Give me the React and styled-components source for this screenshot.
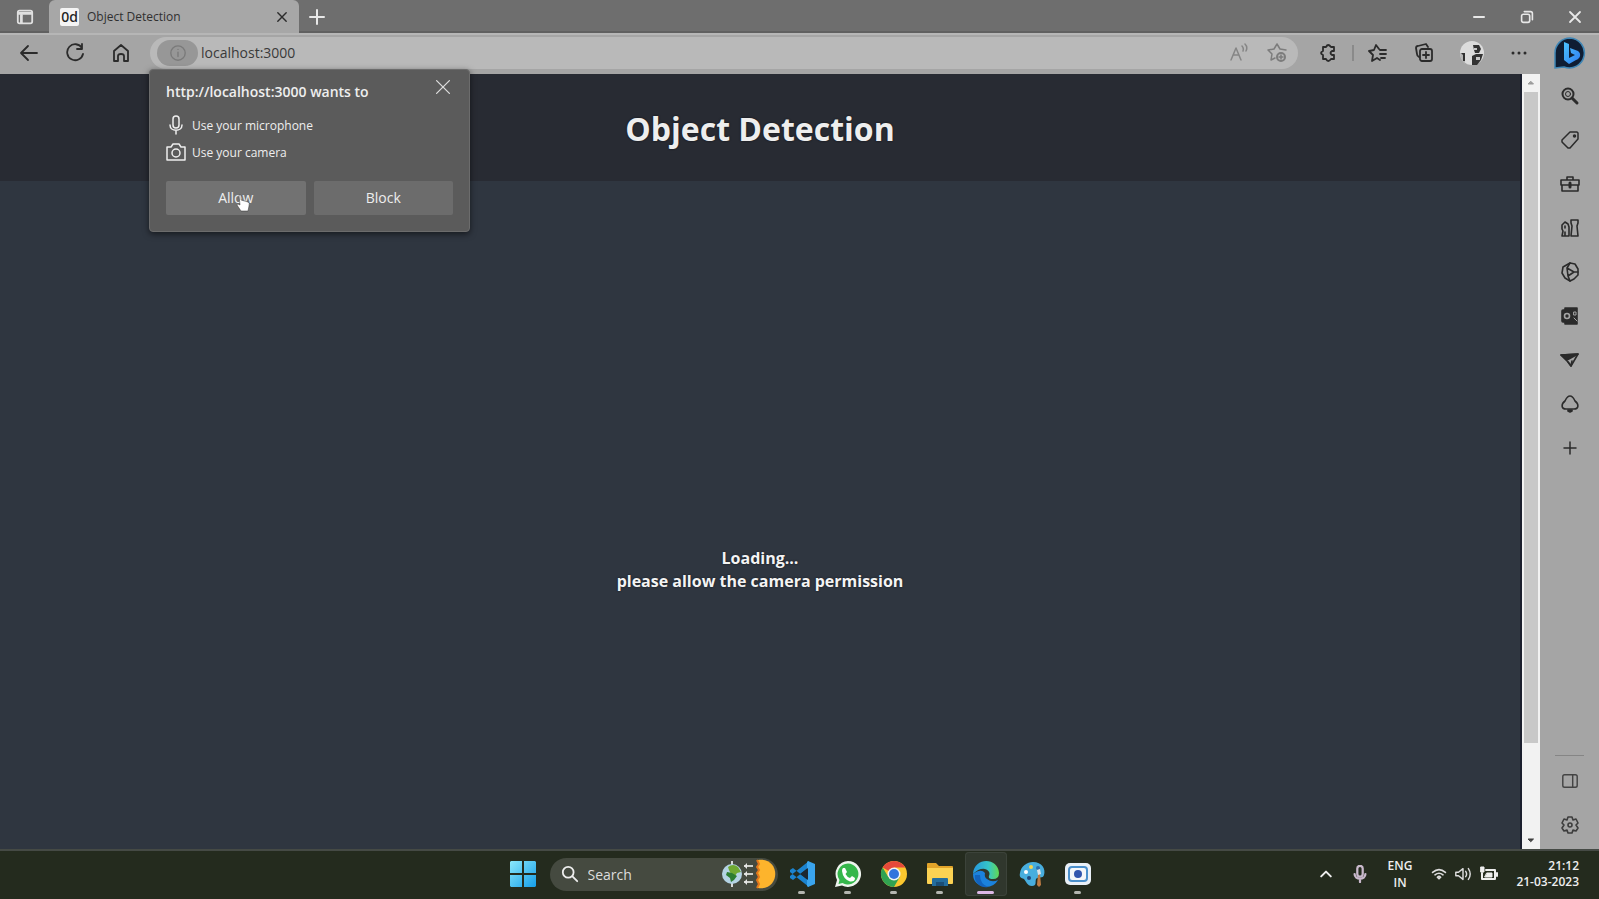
import React from "react";
import styled, { createGlobalStyle } from "styled-components";

const GlobalStyle = createGlobalStyle`
  *, *::before, *::after { box-sizing: border-box; }
  html, body { margin: 0; padding: 0; background: #a5a5a5; }
  body, button, input {
    font-family: "Open Sans", "Noto Sans", "Liberation Sans", sans-serif;
  }
  button { border: 0; padding: 0; background: none; color: inherit; }
  h1, h2, p, ul { margin: 0; padding: 0; font-weight: inherit; }
`;

/* ---------- shell ---------- */

const Desktop = styled.div`
  display: flex;
  flex-direction: column;
  min-height: 100vh;
  overflow: hidden;
`;

const Row = styled.div`
  display: flex;
  align-items: center;
`;

const IconButton = styled.button`
  display: flex;
  flex: none;
  align-items: center;
  justify-content: center;
  width: ${(p) => p.$w || 46}px;
  height: ${(p) => p.$h || 32}px;
  color: ${(p) => p.$color || "#2b2b2b"};
`;

const Svg = styled.svg`
  display: block;
  flex: none;
  fill: none;
  stroke: currentColor;
  stroke-width: ${(p) => p.$weight || 2};
  stroke-linecap: round;
  stroke-linejoin: round;
`;

const Icon = ({ size = 20, weight, children }) => (
  <Svg width={size} height={size} viewBox="0 0 20 20" $weight={weight} aria-hidden="true">
    {children}
  </Svg>
);

/* ---------- tab strip ---------- */

const TabStrip = styled(Row)`
  height: 33px;
  background: #6e6e6e;
  box-shadow: inset 0 -2px 0 #606060;
`;

const Tab = styled.div`
  display: flex;
  align-items: center;
  width: 250px;
  height: 33px;
  padding: 0 4px 0 11px;
  gap: 8px;
  border-radius: 6px 6px 0 0;
  background: #a7a7a7;
  color: #303030;
`;

const Favicon = styled.span`
  width: 19px;
  height: 18px;
  border-radius: 2px;
  background: #f4f4f4;
  color: #222222;
  font: 500 14px/18px "Noto Sans", sans-serif;
  text-align: center;
`;

const TabTitle = styled.span`
  flex: 1;
  font-size: 12px;
  font-weight: 500;
  line-height: 18px;
`;

const WindowControls = styled(Row)`
  margin-left: auto;
`;

/* ---------- toolbar ---------- */

const Toolbar = styled(Row)`
  height: 41px;
  padding: 0 0 4px 6px;
  background: #a5a5a5;
  border-top: 2px solid #b6b6b6;
`;

const AddressBar = styled.div`
  position: relative;
  display: flex;
  flex: 1;
  align-items: center;
  height: 32px;
  margin: 0 7px 0 6px;
  padding: 0 2px 0 7px;
  border-radius: 16px;
  background: #b9b9b9;
`;

const SiteInfo = styled(IconButton)`
  width: 41px;
  height: 26px;
  margin-right: 3px;
  border-radius: 13px;
  background: #979797;
  color: #7a7a7a;
`;

const AddressInput = styled.input`
  flex: 1;
  min-width: 0;
  height: 28px;
  padding: 0;
  border: 0;
  outline: 0;
  background: transparent;
  color: #3a3a3a;
  font-size: 14px;
`;

const Divider = styled.span`
  width: 2px;
  height: 16px;
  margin: 0 1px;
  background: #8a8a8a;
`;

/* ---------- permission prompt ---------- */

const Prompt = styled.section`
  position: absolute;
  z-index: 2;
  top: 100%;
  left: -1px;
  width: 321px;
  padding: 12px 16px 16px;
  border: 1px solid #6c6c6c;
  border-radius: 4px;
  background: #5b5b5b;
  box-shadow: 0 2px 6px rgba(0, 0, 0, 0.55);
  color: #eeeeee;
`;

const PromptHead = styled.div`
  display: flex;
  justify-content: space-between;
  align-items: flex-start;
  height: 30px;
`;

const PromptTitle = styled.h2`
  font-size: 14px;
  font-weight: 600;
  line-height: 20px;
`;

const PromptClose = styled.button`
  display: flex;
  align-items: center;
  justify-content: center;
  width: 20px;
  height: 10px;
  color: #dddddd;
`;

const RequestList = styled.ul`
  list-style: none;
`;

const Request = styled.li`
  display: flex;
  align-items: center;
  gap: 6px;
  height: 27px;
  font-size: 12px;
  font-weight: 500;
`;

const Actions = styled.div`
  display: grid;
  grid-template-columns: 1fr 1fr;
  gap: 8px;
  margin-top: 15px;
`;

const ActionButton = styled.button`
  position: relative;
  height: 34px;
  border-radius: 2px;
  background: ${(p) => (p.$hover ? "#727272" : "#6c6c6c")};
  font-size: 14px;
  font-weight: 500;
`;

const Pointer = styled.svg`
  position: absolute;
  top: 13px;
  left: 70px;
`;

/* ---------- page ---------- */

const Body = styled.div`
  display: flex;
  flex: 1;
`;

const Page = styled.div`
  display: flex;
  flex: 1;
  flex-direction: column;
  background: #2f3640;
  border-right: 2px solid #1b1f2e;
`;

const PageHeader = styled.header`
  display: flex;
  align-items: center;
  justify-content: center;
  height: 107px;
  padding-top: 2px;
  background: #282b33;
`;

const PageTitle = styled.h1`
  color: #eeeeee;
  font: 700 32px/44px "Open Sans", "Noto Sans", sans-serif;
  text-shadow: 0 0 2px #0c0e12;
`;

const Loading = styled.main`
  display: flex;
  flex: 1;
  flex-direction: column;
  align-items: center;
  justify-content: center;
  padding-top: 110px;
  color: #f4f4f4;
  font-size: 16px;
  font-weight: 700;
  line-height: 23px;
  text-shadow: 0 0 2px #12161c;
`;

const ScrollBar = styled.div`
  display: flex;
  flex-direction: column;
  width: 18px;
  background: #f2f2f2;
`;

const ScrollThumb = styled.span`
  flex: 652;
  margin: 0 2px;
  background: #c8c8c8;
`;

const ScrollSpace = styled.span`
  flex: 88;
`;

const SideBar = styled.aside`
  display: flex;
  flex-direction: column;
  align-items: center;
  width: 59px;
  padding-bottom: 2px;
  background: #a5a5a5;
`;

const SideRule = styled.span`
  width: 29px;
  height: 1px;
  margin: auto 0 3px;
  background: #858585;
`;

/* ---------- taskbar ---------- */

const Taskbar = styled.footer`
  display: grid;
  grid-template-columns: 1fr auto 1fr;
  align-items: center;
  height: 50px;
  padding-bottom: 2px;
  border-top: 2px solid #454a45;
  background: #242b1e;
  color: #eeeeee;
`;

const StartButton = styled.button`
  width: 44px;
  height: 46px;
  margin-left: 2px;
  display: grid;
  place-items: center;
`;

const SearchBox = styled.label`
  display: flex;
  align-items: center;
  gap: 9px;
  width: 228px;
  height: 33px;
  margin: 0 1px 0 5px;
  padding: 0 1px 0 11px;
  border-radius: 17px;
  background: #454a40;
`;

const SearchInput = styled.input`
  flex: 1;
  min-width: 0;
  padding: 0;
  border: 0;
  outline: 0;
  background: transparent;
  font-size: 14px;
  &::placeholder { color: #dddddd; opacity: 1; }
`;

const AppButton = styled.button`
  display: flex;
  flex-direction: column;
  align-items: center;
  width: 42px;
  height: 44px;
  margin: 0 2px;
  padding-top: 8px;
  gap: 3px;
  border-radius: 4px;
  background: ${(p) => (p.$active ? "#30372d" : "transparent")};
  box-shadow: ${(p) => (p.$active ? "inset 0 0 0 1px #3c433a" : "none")};
  &::after {
    content: "";
    width: ${(p) => (p.$active ? 17 : 7)}px;
    height: 3px;
    border-radius: 2px;
    background: ${(p) => (p.$active ? "#dcb8e6" : "#b4b6b0")};
    visibility: ${(p) => (p.$idle ? "hidden" : "visible")};
  }
`;

const Tray = styled(Row)`
  justify-content: flex-end;
  padding-right: 20px;
`;

const Language = styled.button`
  width: 40px;
  margin: 0 7px 0 3px;
  font-size: 12px;
  font-weight: 600;
  line-height: 17px;
`;

const Clock = styled.time`
  width: 76px;
  font-size: 12px;
  font-weight: 600;
  line-height: 16px;
  text-align: right;
  white-space: nowrap;
`;

/* ---------- drawings ---------- */

const MicIcon = ({ size = 20, weight = 1.5 }) => (
  <Icon size={size} weight={weight}>
    <rect x="7" y="1" width="6" height="12" rx="3" />
    <path d="M4 10c0 7 12 7 12 0M10 15.500v3.500" />
  </Icon>
);

const BingIcon = () => (
  <svg width="34" height="34" viewBox="0 0 34 34" aria-hidden="true">
    <defs>
      <linearGradient id="bing-b" x1="0" y1="0" x2="1" y2="1">
        <stop offset="0" stopColor="#4cc4ff" />
        <stop offset="1" stopColor="#2f7cf0" />
      </linearGradient>
    </defs>
    <path d="M17 2a15 15 0 1 1-6 29l-9 1V17A15 15 0 0 1 17 2z" fill="#0f1d33" stroke="#3f86b5" strokeWidth="1.500" />
    <path d="M11 6l5 2v14l6-3-4-2-1-5 8 3c4 3 2 8-2 9l-7 4-5-4z" fill="url(#bing-b)" />
  </svg>
);

const AvatarIcon = () => (
  <svg width="28" height="28" viewBox="0 0 28 28" aria-hidden="true">
    <circle cx="14" cy="14" r="12" fill="#dcdcdc" />
    <path d="M2 14h5v11q-4-3-5-11z" fill="#b5b5b5" />
    <path d="M3 14h4v8H5v-6z" fill="#303030" />
    <path d="M15 6h6l2 4-2 4h-4l-1-3zM14 17l4-2h7l-2 6-4 5h-5z" fill="#333333" />
    <path d="M16 9h3v2h-3zM18 18h4v3h-4z" fill="#c9c9c9" />
  </svg>
);

const WindowsIcon = () => (
  <svg width="26" height="26" viewBox="0 0 26 26" aria-hidden="true">
    <defs>
      <linearGradient id="win" x1="0" y1="0" x2="1" y2="1">
        <stop offset="0" stopColor="#8be8fb" />
        <stop offset="1" stopColor="#159ee9" />
      </linearGradient>
    </defs>
    <path d="M1 0h11v12H0V1zM14 0h11l1 1v11H14zM0 14h12v12H1l-1-1zM14 14h12v11l-1 1H14z" fill="url(#win)" />
  </svg>
);

const EquinoxIcon = () => (
  <svg width="56" height="32" viewBox="0 0 56 32" aria-hidden="true">
    <path d="M11 3v26" stroke="#d9d9d9" strokeWidth="2" />
    <circle cx="11" cy="16" r="10" fill="#b4d3e4" />
    <path d="M7 9q5-4 10 0l3 5-4 1-2 3-4-2-2-4z" fill="#6fa832" />
    <path d="M6 14l5 1 5 3-3 4-3 2-1-4-4-3z" fill="#2c7d31" />
    <path d="M23 8h9M23 16h9M23 24h9" stroke="#cfd1cc" strokeWidth="2" />
    <path d="M23 8l3-3v6zM23 16l3-3v6zM23 24l3-3v6z" fill="#e6e6e6" />
    <path d="M37 2c23-3 23 31 0 28z" fill="#fdb42c" />
    <path d="M36 2l2 4-2 3 2 3-2 3 2 4-2 3 2 4-2 4" fill="none" stroke="#e2761b" strokeWidth="2" />
  </svg>
);

const CodeIcon = () => (
  <svg width="28" height="28" viewBox="0 0 28 28" aria-hidden="true">
    <path d="M2 10l3-2 16 13v6L2 12zM2 18l3 2L21 7V1L2 16z" fill="#1b83cf" />
    <path d="M20 1l7 3v20l-7 3-1-1V2z" fill="#3aa5ee" />
    <path d="M20 8v12l-8-6z" fill="#1c2832" />
  </svg>
);

const WhatsAppIcon = () => (
  <svg width="28" height="28" viewBox="0 0 28 28" aria-hidden="true">
    <path d="M14 1a13 13 0 1 1-6 24.500L1 27l2-7A13 13 0 0 1 14 1z" fill="#eef4ee" />
    <path d="M14 3.500a10.500 10.500 0 1 1-5.500 19.500L4.500 24l1-4A10.500 10.500 0 0 1 14 3.500z" fill="#35b74b" />
    <path d="M9 8h2l2 4-1.500 2q1.500 3 4.500 4l2-2 3 2q0 4-5 3.500Q9 19 8 11q0-2 1-3z" fill="#ffffff" />
  </svg>
);

const ChromeIcon = () => (
  <svg width="28" height="28" viewBox="0 0 28 28" aria-hidden="true">
    <circle cx="14" cy="14" r="13" fill="#fbc72e" />
    <path d="M14 14L2.700 7.500A13 13 0 0 1 25.300 7.500H14z" fill="#e5493a" />
    <path d="M2.700 7.500A13 13 0 0 0 14 27l5.600-9.800L14 14l-5.600 3.200z" fill="#31a351" />
    <circle cx="14" cy="14" r="6.500" fill="#f3f3f3" />
    <circle cx="14" cy="14" r="5" fill="#3274dd" />
  </svg>
);

const FolderIcon = () => (
  <svg width="28" height="28" viewBox="0 0 28 28" aria-hidden="true">
    <path d="M1 4q0-1 1-1h8l3 3h13q1 0 1 1v5H1z" fill="#e2a42a" />
    <path d="M1 8h26v15q0 1-1 1H2q-1 0-1-1z" fill="#fbd253" />
    <path d="M6 19q0-1 1-1h14q1 0 1 1v7H6z" fill="#236d9e" />
    <path d="M10 22h8v4h-8z" fill="#1a4e77" />
  </svg>
);

const EdgeIcon = () => (
  <svg width="28" height="28" viewBox="0 0 28 28" aria-hidden="true">
    <defs>
      <linearGradient id="edge-top" x1="0" y1="0" x2="1" y2="0">
        <stop offset="0" stopColor="#2597df" />
        <stop offset="0.6" stopColor="#36c5c7" />
        <stop offset="1" stopColor="#62d851" />
      </linearGradient>
    </defs>
    <path d="M1 14Q1 25 14 27q8 0 12-7-6 3-11-1-3-2-2-6-4-5-12 1z" fill="#1b82dd" />
    <path d="M8 15q0 9 8 12-6 1-10-3-4-4-3-9z" fill="#1263bd" />
    <path d="M1 14C2-3 26-3 27 13q0 6-6 6-5 0-4-3 2-5-4-7Q7 8 1 14z" fill="url(#edge-top)" />
  </svg>
);

const PaintIcon = () => (
  <svg width="28" height="28" viewBox="0 0 28 28" aria-hidden="true">
    <path d="M15 2c9 0 13 7 11 13-1 4-6 1-8 4-1 3 1 7-4 7-5 0-6-5-8-7-3-1-5-2-4-6C3 6 9 2 15 2z" fill="#48aede" />
    <circle cx="8" cy="12" r="2" fill="#ffffff" />
    <circle cx="13" cy="7" r="2" fill="#f5d550" />
    <circle cx="20" cy="8" r="2" fill="#2c6fae" />
    <circle cx="11" cy="18" r="2" fill="#22497c" />
    <path d="M20 14h2l1 11-2 2-2-2z" fill="#bd7b44" />
    <path d="M19 10l3-1 1 5-3 1z" fill="#dce3e8" />
  </svg>
);

const CameraAppIcon = () => (
  <svg width="28" height="28" viewBox="0 0 28 28" aria-hidden="true">
    <rect x="1" y="3" width="26" height="22" rx="5" fill="#e9f0f7" />
    <rect x="5" y="7" width="18" height="14" rx="3" fill="#f4f6f9" stroke="#4a8fcb" strokeWidth="2" />
    <circle cx="14" cy="14" r="4" fill="#3155ad" />
  </svg>
);

const sideItems = [
  ["Search", <Icon weight={2}><circle cx="8" cy="8" r="5.500" /><circle cx="8" cy="8" r="2.500" strokeWidth="1" /><path d="M12 12l5 5" strokeWidth="3" /></Icon>],
  ["Shopping", <Icon weight={1.5}><path d="M10 2h7l1 1v6l-8 9H8l-6-6v-2z" /><circle cx="14.500" cy="6" r="1" fill="currentColor" /></Icon>],
  ["Tools", <Icon weight={1.6}><path d="M1 6h18v5H1zM2 11v6h16v-6M7 6V3h6v3" /><path d="M10 9v4" strokeWidth="3" /></Icon>],
  ["Games", <Icon weight={1.6}><path d="M11 2h7v3l-1 3 1 10h-7l1-10-1-3zM2 18h7V9L8 6 5 4 2 7v4l1 2zM5 8v2M5 14v3" /></Icon>],
  ["Microsoft 365", <Icon weight={1.6}><path d="M10 1l5 1 3 5v6l-4 4-4 2-5-3-3-5 1-6z" /><path d="M7 6l7 4-6 4zM10 1L7 6M18 10h-4M8 14l2 5" /></Icon>],
  ["Outlook", <Icon weight={1.6}><path d="M5 2h12v16H5z" fill="currentColor" /><rect x="2" y="4" width="10" height="12" rx="1" fill="currentColor" /><circle cx="7" cy="10" r="2.500" stroke="#a5a5a5" /><path d="M14 6h2v3h-2zM14 12l3 3" stroke="#a5a5a5" strokeWidth="1" /></Icon>],
  ["Drop", <Icon weight={1.6}><path d="M1 5l17-1-7 12-3-4z" /><path d="M1 5l17-1L7 10z" fill="currentColor" /><path d="M8 12l3 4 1-5" /></Icon>],
  ["Discover", <Icon weight={1.6}><path d="M10 2c3 0 4 3 5 5 4 3 4 8-1 8H6c-5 0-5-5-1-8 1-2 2-5 5-5z" /><path d="M8 16h4v1l-2 1-2-1z" fill="currentColor" /></Icon>],
  ["Customize", <Icon weight={1.5}><path d="M10 4v12M4 10h12" /></Icon>],
];

const apps = [
  ["Visual Studio Code", <CodeIcon />],
  ["WhatsApp", <WhatsAppIcon />],
  ["Chrome", <ChromeIcon />],
  ["File Explorer", <FolderIcon />],
  ["Edge", <EdgeIcon />, "active"],
  ["Paint", <PaintIcon />, "idle"],
  ["Screen Recorder", <CameraAppIcon />],
];

export default function App() {
  return (
    <Desktop>
      <GlobalStyle />
      <TabStrip>
        <IconButton $w={49} $color="#e0e0e0" aria-label="Tab actions">
          <Icon size={18}><rect x="2" y="3" width="16" height="14" rx="2" /><path d="M3 6h14" strokeWidth="3" /><path d="M6 8v8" strokeWidth="3" /></Icon>
        </IconButton>
        <Tab>
          <Favicon>0d</Favicon>
          <TabTitle>Object Detection</TabTitle>
          <IconButton $w={26} aria-label="Close tab">
            <Icon size={14}><path d="M4 4l12 12M16 4L4 16" /></Icon>
          </IconButton>
        </Tab>
        <IconButton $w={36} $color="#e8e8e8" aria-label="New tab">
          <Icon weight={2}><path d="M10 3v14M3 10h14" /></Icon>
        </IconButton>
        <WindowControls>
          <IconButton $w={48} $color="#e8e8e8" aria-label="Minimize"><Icon weight={2}><path d="M5 10h10" /></Icon></IconButton>
          <IconButton $w={48} $color="#e8e8e8" aria-label="Restore"><Icon size={18} weight={1.8}><rect x="4" y="7" width="9" height="9" rx="2" /><path d="M7 4h7q2 0 2 2v7" /></Icon></IconButton>
          <IconButton $w={48} $color="#e8e8e8" aria-label="Close"><Icon weight={1.8}><path d="M5 5l10 10M15 5L5 15" /></Icon></IconButton>
        </WindowControls>
      </TabStrip>

      <Toolbar>
        <IconButton aria-label="Back"><Icon weight={1.8}><path d="M18 10H2M9 3l-7 7 7 7" /></Icon></IconButton>
        <IconButton aria-label="Refresh"><Icon weight={1.8}><path d="M17 5A8 8 0 1 0 18 11M17 1v5h-5" /></Icon></IconButton>
        <IconButton aria-label="Home"><Icon weight={1.8}><path d="M3 8l7-6 7 6v10h-4v-5q0-2-3-2t-3 2v5H3z" /></Icon></IconButton>
        <AddressBar>
          <SiteInfo aria-label="View site information">
            <Icon size={18} weight={1.5}><circle cx="10" cy="10" r="8" /><path d="M10 9v5M10 6v0" /></Icon>
          </SiteInfo>
          <AddressInput aria-label="Address" defaultValue="localhost:3000" />
          <IconButton $w={38} $color="#858585" aria-label="Read aloud"><Icon weight={1.5}><path d="M2 17L7 5l5 12M4 12h6M13 3q2 2 1 5M16 1q3 3 1 7" /></Icon></IconButton>
          <IconButton $w={38} $color="#7c7c7c" aria-label="Add to favorites"><Icon weight={1.5}><path d="M8 15l-4 2 1-6-4-4 6-1 3-5 3 5 6 1" /><circle cx="14" cy="14" r="4" strokeWidth="2" /><path d="M12 14h4M14 12v4" /></Icon></IconButton>
          <Prompt aria-label="Site permissions">
            <PromptHead>
              <PromptTitle>http://localhost:3000 wants to</PromptTitle>
              <PromptClose aria-label="Dismiss"><Icon size={16} weight={1.6}><path d="M2 2l16 16M18 2L2 18" /></Icon></PromptClose>
            </PromptHead>
            <RequestList>
              <Request><MicIcon />Use your microphone</Request>
              <Request><Icon weight={1.5}><path d="M1 5h4l2-3h6l2 3h4v13H1z" /><circle cx="10" cy="11" r="4" /></Icon>Use your camera</Request>
            </RequestList>
            <Actions>
              <ActionButton $hover>
                Allow
                <Pointer width="14" height="18" viewBox="0 0 14 18" aria-hidden="true">
                  <path d="M3 1q2-1 2 1v4l7 2q2 1 1 4l-1 5H5L1 11q0-2 3 0z" fill="#ffffff" stroke="#333333" strokeWidth="0.5" />
                </Pointer>
              </ActionButton>
              <ActionButton>Block</ActionButton>
            </Actions>
          </Prompt>
        </AddressBar>
        <IconButton aria-label="Extensions"><Icon weight={1.8}><path d="M6 4h2q2-4 5 0h3v4h-2q-3 2 0 4h2v4h-3q-3 4-5 0H5v-4q-4-2 0-4V4z" /></Icon></IconButton>
        <Divider />
        <IconButton aria-label="Favorites"><Icon weight={1.8}><path d="M11 6L8 2 6 7l-5 1 4 4-1 6 5-3 3 2M12 7h6M12 11h6M13 15h4" /></Icon></IconButton>
        <IconButton aria-label="Collections"><Icon weight={1.8}><path d="M5 14q-2-1-2-3L2 5q0-2 2-2l8-2 2 3" /><rect x="6" y="6" width="12" height="12" rx="2" /><path d="M12 9v6M9 12h6" /></Icon></IconButton>
        <IconButton $w={50} aria-label="Profile"><AvatarIcon /></IconButton>
        <IconButton $w={44} aria-label="Settings and more"><Icon weight={3}><path d="M4 10v0M10 10v0M16 10v0" /></Icon></IconButton>
        <IconButton $w={58} aria-label="Bing chat"><BingIcon /></IconButton>
      </Toolbar>

      <Body>
        <Page>
          <PageHeader><PageTitle>Object Detection</PageTitle></PageHeader>
          <Loading>
            <p>Loading...</p>
            <p>please allow the camera permission</p>
          </Loading>
        </Page>
        <ScrollBar aria-hidden="true">
          <IconButton as="span" $w={18} $h={18} $color="#9a9a9a"><Icon size={10}><path d="M5 12h10l-5-5z" fill="currentColor" /></Icon></IconButton>
          <ScrollThumb />
          <ScrollSpace />
          <IconButton as="span" $w={18} $h={18} $color="#3d3d3d"><Icon size={10}><path d="M5 8h10l-5 5z" fill="currentColor" /></Icon></IconButton>
        </ScrollBar>
        <SideBar>
          {sideItems.map(([name, icon]) => (
            <IconButton key={name} $h={44} aria-label={name}>{icon}</IconButton>
          ))}
          <SideRule />
          <IconButton $h={44} $color="#444444" aria-label="Toggle sidebar"><Icon size={18} weight={1.6}><rect x="2" y="3" width="16" height="14" rx="2" /><path d="M13 3v14" /></Icon></IconButton>
          <IconButton $h={44} $color="#3d3d3d" aria-label="Settings"><Icon weight={1.6}><path d="M8 2h4l1 3 3-1 2 4-2 2 2 3-2 3-3-1-1 3H8l-1-3-3 1-2-3 2-3-2-2 2-4 3 1z" /><circle cx="10" cy="10" r="2" /></Icon></IconButton>
        </SideBar>
      </Body>

      <Taskbar>
        <span />
        <Row>
          <StartButton aria-label="Start"><WindowsIcon /></StartButton>
          <SearchBox>
            <Icon size={18} weight={2}><circle cx="8" cy="8" r="6" /><path d="M13 13l5 5" /></Icon>
            <SearchInput type="search" aria-label="Search" placeholder="Search" />
            <EquinoxIcon />
          </SearchBox>
          {apps.map(([name, icon, state]) => (
            <AppButton key={name} aria-label={name} $active={state === "active"} $idle={state === "idle"}>{icon}</AppButton>
          ))}
        </Row>
        <Tray>
          <IconButton $w={34} $color="#eeeeee" aria-label="Show hidden icons"><Icon size={16} weight={2.5}><path d="M4 13l6-6 6 6" /></Icon></IconButton>
          <IconButton $w={34} $color="#c9b9cc" aria-label="Microphone in use"><MicIcon size={18} weight={2.5} /></IconButton>
          <Language aria-label="Keyboard language">ENG<br />IN</Language>
          <IconButton $w={24} $color="#dddddd" aria-label="Network"><Icon size={16} weight={2}><path d="M2 8q8-7 16 0M5 11q5-4 10 0M8 14q2-2 4 0l-2 2z" /></Icon></IconButton>
          <IconButton $w={24} $color="#dddddd" aria-label="Volume"><Icon size={18} weight={1.6}><path d="M2 8v4h3l5 4V4L5 8zM13 7q2 3 0 6M16 4q4 6 0 12" /></Icon></IconButton>
          <IconButton $w={28} $color="#eeeeee" aria-label="Battery"><Icon size={20} weight={2}><path d="M7 6h9v9H3V9M18 9v3" /><path d="M2 3h3v5H2zM8 9h5v4H6z" fill="currentColor" strokeWidth="1" /></Icon></IconButton>
          <Clock>21:12<br />21-03-2023</Clock>
        </Tray>
      </Taskbar>
    </Desktop>
  );
}
